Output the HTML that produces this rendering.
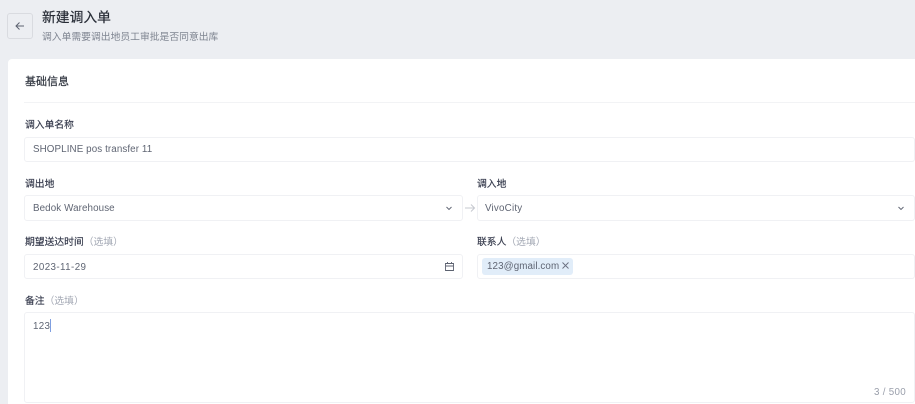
<!DOCTYPE html>
<html><head><meta charset="utf-8">
<style>
html,body{margin:0;padding:0;width:915px;height:404px;overflow:hidden}
body{background:#eceef2;position:relative;font-family:"Liberation Sans","Noto Sans CJK SC",sans-serif;color:#3c4250}
#w{position:absolute;left:0;top:0;width:915px;height:404px;overflow:hidden;filter:blur(.3px)}
.a{position:absolute;white-space:nowrap}
.card{position:absolute;left:8px;top:59px;width:907px;height:345px;background:#fff;border-radius:4px 0 0 0}
.label{position:absolute;font-size:9.8px;line-height:14px;color:#33384a;white-space:nowrap;-webkit-text-stroke:.15px #33384a}
.label span{color:#a3a8b4;-webkit-text-stroke:0}
.box{position:absolute;background:#fff;border:1px solid #f0f1f4;border-radius:3px;box-sizing:border-box;font-size:9.8px;color:#5f6573;letter-spacing:.1px;padding-left:8px;white-space:nowrap}
svg{position:absolute;display:block}
</style></head><body><div id="w">
<div class="a" style="left:7px;top:13px;width:26px;height:26px;border:1px solid #d9dbe0;border-radius:3px;box-sizing:border-box"></div>
<svg style="left:14px;top:20px" width="12" height="12" viewBox="0 0 12 12" fill="none" stroke="#5c6270" stroke-width="1"><path d="M10 6H2M5.500 2.500L2 6l3.500 3.500"/></svg>
<div class="a" style="left:42px;top:9px;font-size:13.8px;line-height:18px;color:#272c36;-webkit-text-stroke:.2px #272c36">新建调入单</div>
<div class="a" style="left:42px;top:31px;font-size:9.8px;line-height:13px;color:#7f8591">调入单需要调出地员工审批是否同意出库</div>
<div class="card"></div>
<div class="a" style="left:25px;top:75px;font-size:11px;line-height:15px;color:#30353f;-webkit-text-stroke:.2px #30353f">基础信息</div>
<div class="a" style="left:24px;top:102px;width:891px;height:1px;background:#f2f3f5"></div>

<div class="label" style="left:25px;top:119px">调入单名称</div>
<div class="box" style="left:24px;top:137px;width:891px;height:25px;line-height:23px">SHOPLINE pos transfer 11</div>

<div class="label" style="left:25px;top:178px">调出地</div>
<div class="box" style="left:24px;top:195px;width:439px;height:26px;line-height:25px">Bedok Warehouse</div>
<svg style="left:444px;top:203px" width="10" height="10" viewBox="0 0 10 10" fill="none" stroke="#5c6270" stroke-width=".9"><path d="M2.500 4L5 6.500 7.500 4"/></svg>
<svg style="left:464px;top:202px" width="12" height="12" viewBox="0 0 12 12" fill="none" stroke="#c5c8cf" stroke-width="1"><path d="M1 6h9.500M7 2.500L10.500 6 7 9.500"/></svg>
<div class="label" style="left:477px;top:178px">调入地</div>
<div class="box" style="left:477px;top:195px;width:438px;height:26px;line-height:25px;padding-left:7px;letter-spacing:.2px">VivoCity</div>
<svg style="left:896px;top:203px" width="10" height="10" viewBox="0 0 10 10" fill="none" stroke="#5c6270" stroke-width=".9"><path d="M2.500 4L5 6.500 7.500 4"/></svg>

<div class="label" style="left:25px;top:236px">期望送达时间<span>（选填）</span></div>
<div class="box" style="left:24px;top:254px;width:439px;height:25px;line-height:25px;letter-spacing:.4px">2023-11-29</div>
<svg style="left:444px;top:261px" width="11" height="11" viewBox="0 0 11 11" fill="none" stroke="#5c6270" stroke-width=".9"><path d="M1.500 2.500h8v7h-8zM1.500 5h8M3.500 1v2M7.500 1v2"/></svg>
<div class="label" style="left:477px;top:236px">联系人<span>（选填）</span></div>
<div class="box" style="left:477px;top:254px;width:438px;height:25px"></div>
<div class="a" style="left:482px;top:258px;width:91px;height:17px;background:#e1edf9;border-radius:3px;font-size:9.8px;line-height:17px;color:#5f6573;padding-left:5px;box-sizing:border-box;letter-spacing:.1px">123@gmail.com</div>
<svg style="left:561px;top:261px" width="9" height="9" viewBox="0 0 9 9" fill="none" stroke="#6a7080" stroke-width=".9"><path d="M1.500 1.500l6 6M7.500 1.500l-6 6"/></svg>

<div class="label" style="left:25px;top:295px">备注<span>（选填）</span></div>
<div class="box" style="left:24px;top:312px;width:891px;height:91px"></div>
<div class="a" style="left:33px;top:320px;font-size:9.8px;line-height:13px;color:#5f6573;letter-spacing:.3px">123</div>
<div class="a" style="left:50px;top:319px;width:1px;height:13px;background:#7f9fe0"></div>
<div class="a" style="right:9px;top:386px;font-size:9.8px;line-height:13px;color:#9a9fab;letter-spacing:.3px">3 / 500</div>
</div></body></html>
